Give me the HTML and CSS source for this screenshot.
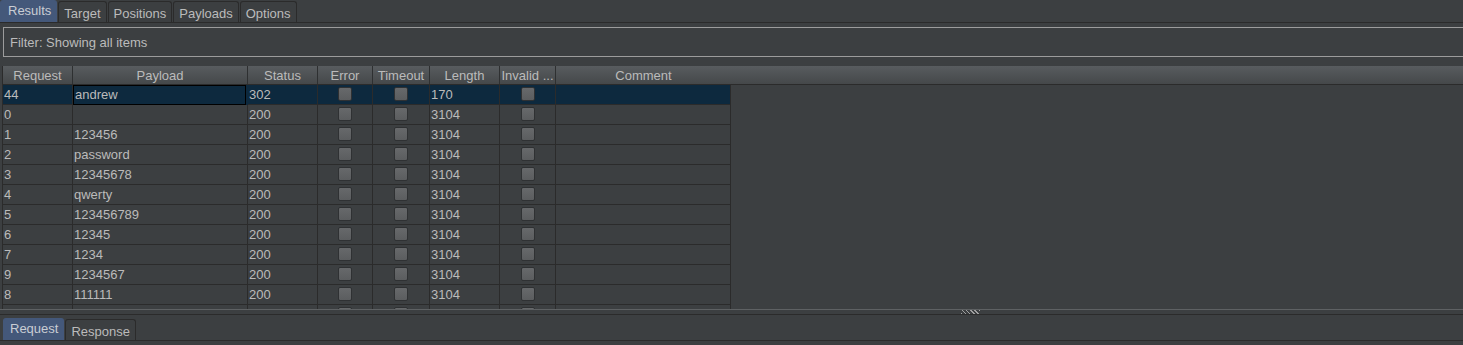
FILE: index.html
```html
<!DOCTYPE html>
<html>
<head>
    <title>Intruder Results</title>
    <link rel="stylesheet" href="styles.css">
</head>
<body>
    <div class="tabs">
        <div class="tab active">Results</div>
        <div class="tab">Target</div>
        <div class="tab">Positions</div>
        <div class="tab">Payloads</div>
        <div class="tab">Options</div>
    </div>

    <div class="filter">Filter: Showing all items</div>

    <div class="results">
        <div class="head">
            <div class="col c-req">Request</div>
            <div class="col c-pay">Payload</div>
            <div class="col c-sta">Status</div>
            <div class="col c-err">Error</div>
            <div class="col c-tim">Timeout</div>
            <div class="col c-len">Length</div>
            <div class="col c-inv">Invalid ...</div>
            <div class="col c-com last">Comment</div>
        </div>
        <div class="rows" id="rows"></div>
    </div>

    <div class="splitter"><span class="grip"></span></div>

    <div class="tabs bottom">
        <div class="tab active">Request</div>
        <div class="tab">Response</div>
    </div>

    <script>
        // last entry is the half-visible row under the fold
        const data = [
            ['44', 'andrew', '302', '170'],
            ['0', '', '200', '3104'],
            ['1', '123456', '200', '3104'],
            ['2', 'password', '200', '3104'],
            ['3', '12345678', '200', '3104'],
            ['4', 'qwerty', '200', '3104'],
            ['5', '123456789', '200', '3104'],
            ['6', '12345', '200', '3104'],
            ['7', '1234', '200', '3104'],
            ['9', '1234567', '200', '3104'],
            ['8', '111111', '200', '3104'],
            ['', '', '', '']
        ];

        const rows = document.getElementById('rows');
        data.forEach((d, i) => {
            const row = document.createElement('div');
            row.className = i === 0 ? 'row selected' : 'row';
            row.innerHTML =
                `<div class="cell c-req">${d[0]}</div>` +
                `<div class="cell c-pay">${d[1]}</div>` +
                `<div class="cell c-sta">${d[2]}</div>` +
                `<div class="cell c-err"><span class="check"></span></div>` +
                `<div class="cell c-tim"><span class="check"></span></div>` +
                `<div class="cell c-len">${d[3]}</div>` +
                `<div class="cell c-inv"><span class="check"></span></div>` +
                `<div class="cell c-com"></div>`;
            rows.appendChild(row);
        });
    </script>
</body>
</html>
```

FILE: styles.css
```css
body {
    margin: 0;
    background-color: #3c3f41;
    color: #bbbbbb;
    font-family: 'Liberation Sans', Arial, sans-serif;
    font-size: 13px;
    height: 345px;
    overflow: hidden;
}

.tabs {
    display: flex;
    align-items: flex-end;
    height: 23px;
    box-sizing: border-box;
    border-bottom: 1px solid #2b2b2b;
}
.tab {
    box-sizing: border-box;
    height: 21px;
    line-height: 21px;
    padding: 1px 5px 0 5px;
    border: 1px solid #2b2b2b;
    border-bottom: none;
    border-radius: 3px 3px 0 0;
    margin-right: 1px;
    background-color: #3c3f41;
}
.tab.active {
    height: 22px;
    line-height: 20px;
    padding-top: 0;
    background-color: #44587a;
    color: #c9cdd4;
    border-color: #44587a;
}
.tab:first-child {
    padding-left: 7px;
}

.filter {
    box-sizing: border-box;
    margin: 4px 0 0 3px;
    height: 30px;
    line-height: 29px;
    padding-left: 6px;
    border: 1px solid #9c9c9c;
    border-right: none;
}

.results {
    margin-top: 9px;
    margin-left: 2px;
    height: 243px;
    overflow: hidden;
    border-left: 1px solid #2b2b2b;
}
.head {
    display: flex;
    box-sizing: border-box;
    height: 19px;
    background: linear-gradient(#585c5f, #45484a);
    border-bottom: 1px solid #2b2b2b;
}
.col {
    text-align: center;
    line-height: 20px;
    border-right: 1px solid #2e3031;
    box-sizing: border-box;
}
.col.last {
    border-right: none;
}
.rows {
    width: 728px;
}
.row {
    display: flex;
    height: 20px;
}
.cell {
    box-sizing: border-box;
    height: 20px;
    line-height: 19px;
    padding-left: 1px;
    border-right: 1px solid #2b2b2b;
    border-bottom: 1px solid #2b2b2b;
    white-space: nowrap;
    overflow: hidden;
}
.row.selected {
    background-color: #0d293e;
}
.row.selected .c-pay {
    border: 1px solid #000;
    line-height: 17px;
    margin-right: 2px;
    width: 173px;
}

.c-req { width: 70px; }
.c-pay { width: 175px; }
.c-sta { width: 70px; }
.c-err { width: 55px; }
.c-tim { width: 57px; }
.c-len { width: 70px; }
.c-inv { width: 56px; }
.c-com { width: 175px; }

.cell.c-err, .cell.c-tim, .cell.c-inv {
    display: flex;
    justify-content: center;
    align-items: flex-start;
    padding-top: 2px;
    padding-left: 0;
}
.check {
    display: block;
    width: 14px;
    height: 14px;
    border-radius: 2px;
    background: linear-gradient(#67696b, #5b5d5f);
    border: 1px solid #2f3133;
    box-sizing: border-box;
}

.splitter {
    position: relative;
    height: 4px;
    border-top: 1px solid #5e6163;
    border-bottom: 1px solid #2b2b2b;
}
.grip {
    position: absolute;
    left: 961px;
    top: 0;
    width: 19px;
    height: 4px;
    background: repeating-linear-gradient(45deg, #a0a0a0 0 1px, #3c3f41 1px 3px);
}

.tabs.bottom {
    margin-top: 3px;
    padding-left: 3px;
    height: 23px;
}
.tabs.bottom .tab:first-child {
    padding-left: 6px;
}
```
